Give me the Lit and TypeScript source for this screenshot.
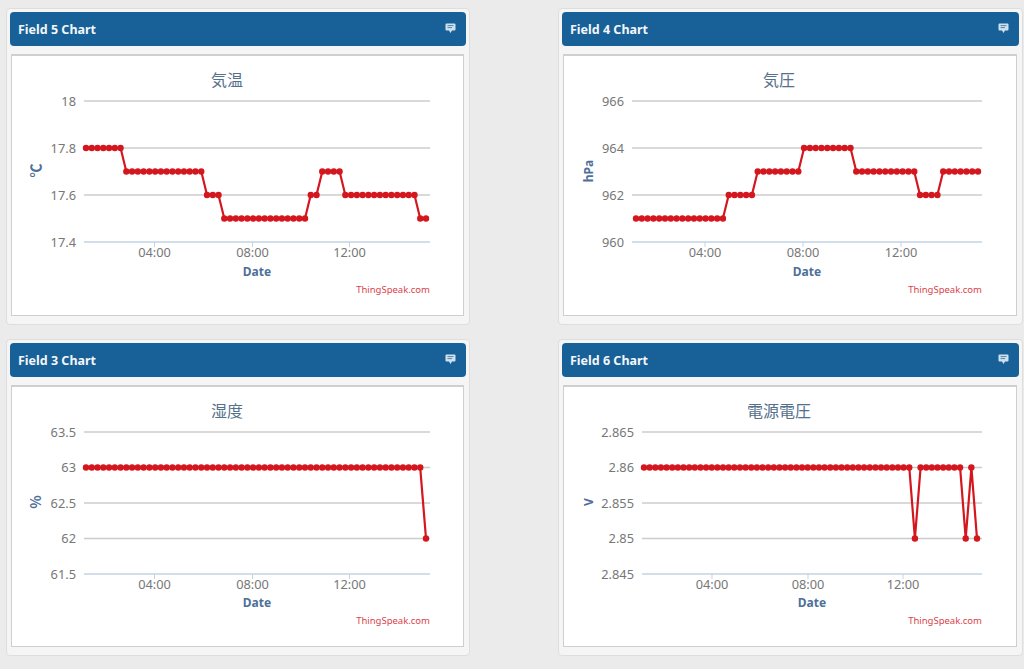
import { LitElement, html, css, svg } from "lit";
import { customElement } from "lit/decorators.js";

interface Chart {
  field: number;
  title: string;
  unit: string;
  unitClass: string;
  left: number;
  first: number;
  last: number;
  bottom: number;
  yLabels: string[];
  ticks: number[];
  pos: number[];
  unitY: number;
  dateX: number;
}

const TOP = 45;
const RIGHT = 418;

function seq(...parts: [number, number][]): number[] {
  const out: number[] = [];
  for (const [v, n] of parts) for (let i = 0; i < n; i++) out.push(v);
  return out;
}

const DATA: Chart[] = [
  {
    field: 5, title: "気温", unit: "℃", unitClass: "big", left: 72, first: 74, last: 414, bottom: 186,
    yLabels: ["18", "17.8", "17.6", "17.4"], ticks: [142.5, 240.5, 337.5],
    pos: seq([1, 7], [1.5, 14], [2, 3], [2.5, 15], [2, 2], [1.5, 4], [2, 13], [2.5, 2]),
    unitY: 114.5, dateX: 245,
  },
  {
    field: 4, title: "気圧", unit: "hPa", unitClass: "", left: 68, first: 72, last: 414, bottom: 186,
    yLabels: ["966", "964", "962", "960"], ticks: [141, 239, 337],
    pos: seq([2.5, 16], [2, 5], [1.5, 8], [1, 9], [1.5, 11], [2, 4], [1.5, 7]),
    unitY: 115, dateX: 243,
  },
  {
    field: 3, title: "湿度", unit: "%", unitClass: "big", left: 72, first: 74, last: 414, bottom: 187,
    yLabels: ["63.5", "63", "62.5", "62", "61.5"], ticks: [142.5, 240.5, 337.5],
    pos: seq([1, 59], [3, 1]),
    unitY: 115, dateX: 245,
  },
  {
    field: 6, title: "電源電圧", unit: "V", unitClass: "", left: 78, first: 80, last: 413, bottom: 187,
    yLabels: ["2.865", "2.86", "2.855", "2.85", "2.845"], ticks: [148, 244, 339],
    pos: seq([1, 48], [3, 1], [1, 8], [3, 1], [1, 1], [3, 1]),
    unitY: 115, dateX: 248,
  },
];

@customElement("app-root")
export class AppRoot extends LitElement {
  static styles = css`
    :host {
      display: block;
      min-height: 669px;
      background: #ebebeb;
      font-family: "Noto Sans", "Noto Sans CJK JP", sans-serif;
      overflow: hidden;
    }
    .grid {
      display: grid;
      grid-template-columns: 464px 465px;
      column-gap: 88px;
      row-gap: 14px;
      padding: 8px 0 0 5.5px;
    }
    .panel {
      box-sizing: border-box;
      height: 317px;
      background: #f5f5f5;
      border: 1px solid #dedede;
      border-radius: 4px;
      padding: 3px 3px 0 3px;
    }
    .head {
      height: 34px;
      box-sizing: border-box;
      background: #186098;
      border-radius: 4px;
      color: #f3f6f9;
      display: flex;
      align-items: center;
      justify-content: space-between;
      padding: 0 10px 0 8.5px;
      font-size: 12.5px;
      font-weight: 700;
    }
    .icon {
      width: 11px;
      height: 11px;
      display: block;
      margin-top: -1px;
    }
    .body {
      box-sizing: border-box;
      height: 262px;
      margin: 8px 2px 0 1.5px;
      background: #fff;
      border: 1px solid #cfcfcf;
      border-top-width: 2px;
    }
    svg.chart {
      display: block;
      width: 451px;
      height: 259px;
    }
    .ylab, .xlab {
      font-size: 12.8px;
      fill: #777777;
    }
    .ylab { text-anchor: end; }
    .xlab { text-anchor: middle; }
    .title {
      font-size: 16px;
      fill: #54708c;
      text-anchor: middle;
    }
    .axt {
      font-size: 12px;
      font-weight: 700;
      fill: #4d6f9a;
      text-anchor: middle;
    }
    .axt.big {
      font-size: 14px;
      font-family: "Noto Sans CJK JP", "Noto Sans", sans-serif;
    }
    .credit {
      font-size: 9.5px;
      fill: #d9434b;
      text-anchor: end;
    }
  `;

  private renderChart(c: Chart) {
    const n = c.yLabels.length;
    const h = c.bottom - TOP;
    const yAt = (i: number) => TOP + (h * i) / (n - 1);
    const step = (c.last - c.first) / (c.pos.length - 1);
    const pts = c.pos.map((p, i) => [c.first + i * step, yAt(p)] as const);
    const line = pts.map(([x, y]) => `${x.toFixed(1)},${y.toFixed(1)}`).join(" ");
    return html`<svg class="chart" viewBox="0 0 451 259">
      <text class="title" x="215" y="30">${c.title}</text>
      ${c.yLabels.map((l, i) => {
        const y = yAt(i);
        return svg`
          <line x1=${c.left} x2=${RIGHT} y1=${y} y2=${y}
            stroke=${i === n - 1 ? "#c3d3e6" : "#cccccc"} stroke-width="1.4"></line>
          <text class="ylab" x=${c.left - 8} y=${y + 4.5}>${l}</text>`;
      })}
      ${c.ticks.map(
        (t, i) => svg`
          <line x1=${t} x2=${t} y1=${c.bottom} y2=${c.bottom + 5} stroke="#c3d3e6"></line>
          <text class="xlab" x=${t} y=${c.bottom + 15}>${["04:00", "08:00", "12:00"][i]}</text>`
      )}
      <polyline points=${line} fill="none" stroke="#d4171f" stroke-width="2.2"></polyline>
      ${pts.map(([x, y]) => svg`<circle cx=${x} cy=${y} r="3.2" fill="#d4171f"></circle>`)}
      <text class="axt ${c.unitClass}" transform="translate(29 ${c.unitY}) rotate(-90)">${c.unit}</text>
      <text class="axt" x=${c.dateX} y="220">Date</text>
      <text class="credit" x=${RIGHT} y="237">ThingSpeak.com</text>
    </svg>`;
  }

  private renderIcon() {
    return html`<svg class="icon" viewBox="0 0 11 11">
      <path d="M1.5 0.5h8a1 1 0 0 1 1 1v5a1 1 0 0 1-1 1H7L5.5 10 4 7.5H1.5a1 1 0 0 1-1-1v-5a1 1 0 0 1 1-1z" fill="#cfe0ee"></path>
      <path d="M2.5 2.6h6M2.5 4.6h4.5" stroke="#4f88b5" stroke-width="1" fill="none"></path>
    </svg>`;
  }

  render() {
    return html`<div class="grid">
      ${DATA.map(
        (c) => html`<section class="panel">
          <div class="head"><span>Field ${c.field} Chart</span>${this.renderIcon()}</div>
          <div class="body">${this.renderChart(c)}</div>
        </section>`
      )}
    </div>`;
  }
}
